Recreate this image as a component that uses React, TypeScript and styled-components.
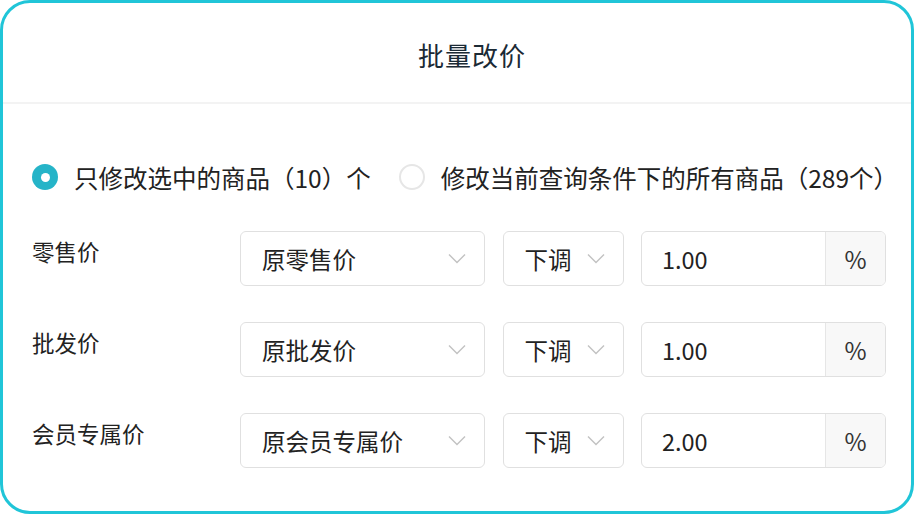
import React from "react";
import styled, { createGlobalStyle } from "styled-components";

const GlobalStyle = createGlobalStyle`
  html, body {
    margin: 0;
    padding: 0;
    background: #ffffff;
  }
  * {
    box-sizing: border-box;
  }
`;

const FONT = `"Noto Sans CJK SC", "Noto Sans", sans-serif`;

const Frame = styled.div`
  width: 914px;
  height: 514px;
  border: 3px solid #20c5d8;
  border-radius: 30px;
  background: #fff;
  font-family: ${FONT};
  color: #222;
  overflow: hidden;
`;

const Header = styled.div`
  height: 101px;
  display: flex;
  align-items: center;
  justify-content: center;
  padding-left: 30px;
  border-bottom: 2px solid #f3f3f3;
`;

const Title = styled.h1`
  margin: 0;
  padding-top: 4px;
  font-size: 26px;
  font-weight: 400;
  color: #1b2a35;
  letter-spacing: 1px;
`;

const Body = styled.div`
  padding: 51px 25px 0 29px;
  display: flex;
  flex-direction: column;
`;

const RadioRow = styled.div`
  display: flex;
  align-items: center;
  height: 44px;
  gap: 28px;
  margin-bottom: 32px;
`;

const RadioOption = styled.label`
  display: flex;
  align-items: center;
  gap: 16px;
  font-size: 24.5px;
  color: #222;
  white-space: nowrap;
`;

const RadioDot = styled.span<{ $checked?: boolean }>`
  width: 26px;
  height: 26px;
  border-radius: 50%;
  flex: none;
  position: relative;
  ${({ $checked }) =>
    $checked
      ? `
    background: #25b4c8;
    &::after {
      content: "";
      position: absolute;
      left: 50%;
      top: 50%;
      width: 9px;
      height: 9px;
      margin: -4.5px 0 0 -4.5px;
      border-radius: 50%;
      background: #fff;
    }
  `
      : `
    border: 2px solid #e6e6e6;
    background: #fff;
  `}
`;

const Rows = styled.div`
  display: flex;
  flex-direction: column;
  gap: 36px;
`;

const Row = styled.div`
  display: flex;
  align-items: flex-start;
`;

const Label = styled.div`
  width: 208px;
  flex: none;
  font-size: 22.5px;
  line-height: 40px;
  color: #222;
`;

const Controls = styled.div`
  display: flex;
  gap: 17.5px;
`;

const Select = styled.div<{ $width: number }>`
  width: ${({ $width }) => $width}px;
  height: 55px;
  border: 1.5px solid #e0e0e0;
  border-radius: 6px;
  display: flex;
  align-items: center;
  justify-content: space-between;
  padding: 0 18px 0 21px;
  font-size: 23.5px;
  color: #222;
`;

const InputGroup = styled.div`
  width: 245px;
  height: 55px;
  border: 1.5px solid #e0e0e0;
  border-radius: 6px;
  display: flex;
  overflow: hidden;
`;

const Value = styled.div`
  flex: 1;
  display: flex;
  align-items: center;
  padding-left: 20px;
  font-size: 23.5px;
  color: #222;
`;

const Addon = styled.div`
  width: 60px;
  flex: none;
  display: flex;
  align-items: center;
  justify-content: center;
  background: #f8f8f8;
  border-left: 1.5px solid #e6e6e6;
  font-size: 24px;
  color: #333;
`;

const Chevron = () => (
  <svg width="18" height="11" viewBox="0 0 18 11" fill="none">
    <path d="M1 1.5L9 9.5L17 1.5" stroke="#c2c2c2" strokeWidth="1.4" />
  </svg>
);

const rows = [
  { label: "零售价", base: "原零售价", dir: "下调", value: "1.00" },
  { label: "批发价", base: "原批发价", dir: "下调", value: "1.00" },
  { label: "会员专属价", base: "原会员专属价", dir: "下调", value: "2.00" },
];

export default function App() {
  return (
    <>
      <GlobalStyle />
      <Frame>
        <Header>
          <Title>批量改价</Title>
        </Header>
        <Body>
          <RadioRow>
            <RadioOption>
              <RadioDot $checked />
              只修改选中的商品（10）个
            </RadioOption>
            <RadioOption>
              <RadioDot />
              修改当前查询条件下的所有商品（289个）
            </RadioOption>
          </RadioRow>
          <Rows>
            {rows.map((r) => (
              <Row key={r.label}>
                <Label>{r.label}</Label>
                <Controls>
                  <Select $width={245}>
                    {r.base}
                    <Chevron />
                  </Select>
                  <Select $width={121}>
                    {r.dir}
                    <Chevron />
                  </Select>
                  <InputGroup>
                    <Value>{r.value}</Value>
                    <Addon>%</Addon>
                  </InputGroup>
                </Controls>
              </Row>
            ))}
          </Rows>
        </Body>
      </Frame>
    </>
  );
}
